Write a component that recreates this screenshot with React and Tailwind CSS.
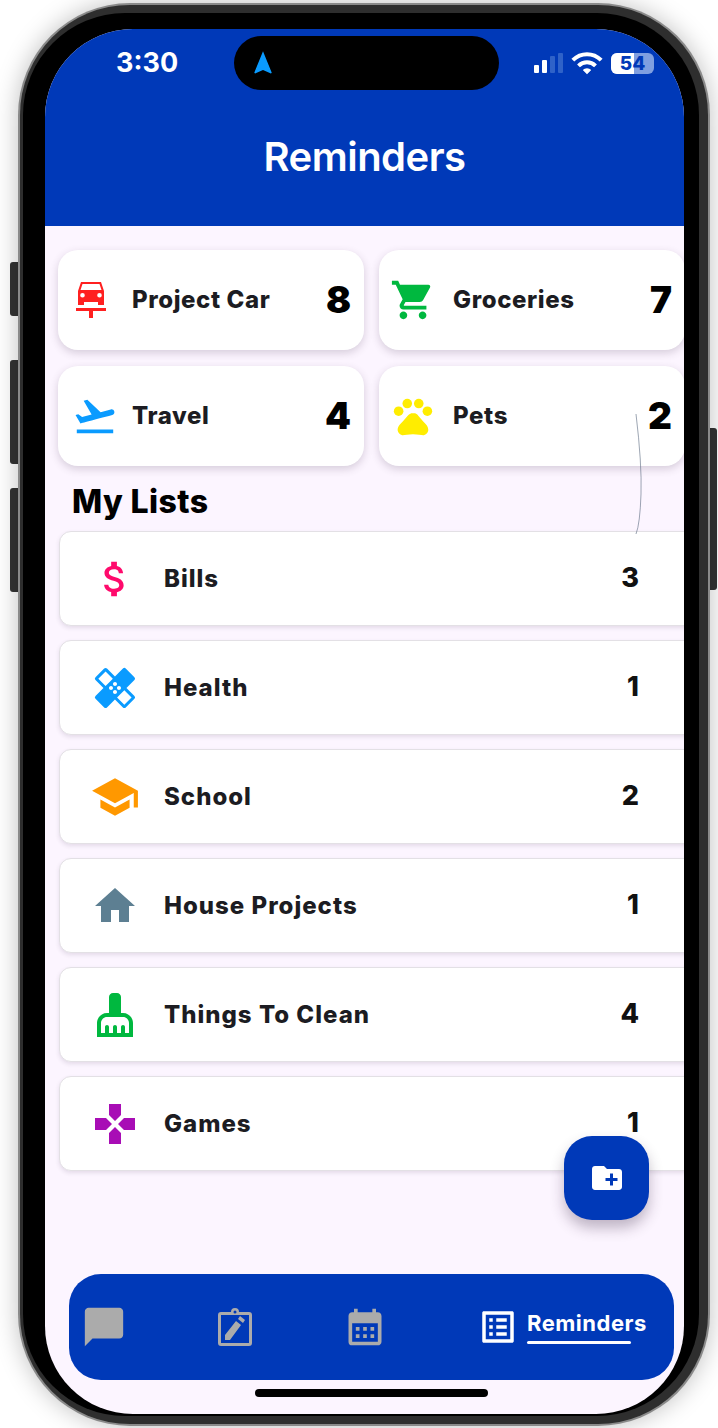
import React from "react";
import {
  MdShoppingCart,
  MdFlightTakeoff,
  MdAttachMoney,
  MdHealing,
  MdSchool,
  MdHome,
  MdCleaningServices,
  MdGamepad,
  MdChatBubble,
  MdCalendarMonth,
  MdOutlineListAlt,
  MdCreateNewFolder,
  MdPets,
  MdNavigation,
  MdWifi,
} from "react-icons/md";

const CarLift = ({ className }) => (
  <svg viewBox="0 0 30 36" className={className} fill="currentColor">
    <path d="M5 0h20l3 9v14h-6v-3H8v3H2V9zM6.500 2 4.500 8h21l-2-6zM6.500 11a2.300 2.300 0 1 0 0 4.600 2.300 2.300 0 0 0 0-4.600zM23.500 11a2.300 2.300 0 1 0 0 4.600 2.300 2.300 0 0 0 0-4.600z" fillRule="evenodd" />
    <path d="M0 26h30v3H17v7h-4v-7H0z" />
  </svg>
);

const ClipboardEdit = ({ className }) => (
  <svg viewBox="0 0 34 38" className={className} fill="currentColor">
    <path fillRule="evenodd" d="M3 4h10a4 4 0 0 1 8 0h10a3 3 0 0 1 3 3v28a3 3 0 0 1-3 3H3a3 3 0 0 1-3-3V7a3 3 0 0 1 3-3zM3 7v28h28V7zM17 2.500a1.500 1.500 0 1 0 0 3 1.500 1.500 0 0 0 0-3z" />
    <path d="M7 32v-5l11-14 5 4-11 15zM20 11l2-3 5 4-2 3z" />
  </svg>
);

const topCards = [
  { name: "Project Car", count: 8, icon: <CarLift className="w-[30px] h-[36px] text-[#ff2020]" />, iconBox: "ml-[18px] w-[56px]" },
  { name: "Groceries", count: 7, icon: <MdShoppingCart className="w-[46px] h-[46px] text-[#00b83f] -ml-[3px]" />, iconBox: "ml-[14px] w-[60px]" },
  { name: "Travel", count: 4, icon: <MdFlightTakeoff className="w-[46px] h-[46px] text-[#0a9bff] -ml-[4px]" />, iconBox: "ml-[18px] w-[56px]" },
  { name: "Pets", count: 2, icon: <MdPets className="w-[46px] h-[46px] text-[#ffed00] -ml-[3px]" />, iconBox: "ml-[14px] w-[60px]" },
];

const lists = [
  { name: "Bills", count: 3, icon: <MdAttachMoney className="w-[46px] h-[46px] text-[#ff0a6c]" /> },
  { name: "Health", count: 1, icon: <MdHealing className="w-[48px] h-[48px] text-[#0a9bff]" /> },
  { name: "School", count: 2, icon: <MdSchool className="w-[50px] h-[50px] text-[#ff9800]" /> },
  { name: "House Projects", count: 1, icon: <MdHome className="w-[48px] h-[48px] text-[#5d7f92]" /> },
  { name: "Things To Clean", count: 4, icon: <MdCleaningServices className="w-[48px] h-[48px] text-[#00b83f]" /> },
  { name: "Games", count: 1, icon: <MdGamepad className="w-[48px] h-[48px] text-[#a80db5]" /> },
];

const StatusIcons = () => (
  <div className="flex items-center ml-auto mr-[30px] gap-[7px]">
    <div className="flex items-end gap-[3px] h-[20px]">
      <div className="w-[5px] h-[8px] rounded-[1px] bg-white" />
      <div className="w-[5px] h-[13px] rounded-[1px] bg-white" />
      <div className="w-[5px] h-[17px] rounded-[1px] bg-[#2f62c8]" />
      <div className="w-[5px] h-[20px] rounded-[1px] bg-[#2f62c8]" />
    </div>
    <MdWifi className="w-[34px] h-[34px] text-white" />
    <div className="relative flex items-center w-[43px] h-[21px] rounded-[6px] overflow-hidden bg-[#7f9fe0]">
      <div className="w-[23px] h-full bg-white" />
      <span className="absolute inset-0 text-center font-['Inter'] font-extrabold text-[19px] leading-[21px] text-[#0039b8]">54</span>
    </div>
  </div>
);

const App = () => {
  return (
    <div className="relative w-[718px] h-[1428px] overflow-hidden bg-white font-['Inter',sans-serif]">
      {/* side buttons */}
      <div className="absolute left-[10px] top-[262px] w-[12px] h-[54px] rounded-l-[3px] bg-[#333]" />
      <div className="absolute left-[10px] top-[360px] w-[12px] h-[104px] rounded-l-[3px] bg-[#333]" />
      <div className="absolute left-[10px] top-[488px] w-[12px] h-[104px] rounded-l-[3px] bg-[#333]" />
      <div className="absolute left-[706px] top-[428px] w-[11px] h-[162px] rounded-r-[3px] bg-[#333]" />

      {/* phone body */}
      <div className="absolute left-[18px] top-[3px] w-[692px] h-[1423px] rounded-[112px] bg-[#8a8a8a] p-[2px] shadow-[0_0_24px_rgba(0,0,0,0.25)]">
        <div className="w-full h-full rounded-[110px] bg-[#2e2e2e] pt-[8px] pl-[3px] pr-[9px] pb-[8px]">
          <div className="w-full h-full rounded-[102px] bg-black pt-[16px] pl-[22px] pr-[15px] pb-[6px]">
            {/* screen */}
            <div className="relative flex flex-col w-[639px] h-[1385px] rounded-[88px] overflow-hidden bg-[#fcf5ff]">
              <header className="flex flex-col h-[197px] bg-[#0039b8]">
                <div className="relative flex items-center h-[66px] pt-[2px]">
                  <span className="ml-[71px] text-white font-bold text-[27px]">3:30</span>
                  <MdNavigation className="absolute left-[205px] top-[18px] w-[26px] h-[26px] text-[#0a9bff]" />
                  <StatusIcons />
                </div>
                <h1 className="mt-[38px] text-center text-white font-semibold text-[40px] leading-[48px] tracking-[-0.5px]">Reminders</h1>
              </header>

              <main className="flex flex-col flex-1 pl-[13px]">
                <div className="grid grid-cols-[306px_306px] gap-x-[15px] gap-y-[16px] mt-[24px]">
                  {topCards.map((card) => (
                    <div key={card.name} className="flex items-center h-[100px] rounded-[20px] bg-white shadow-[0_3px_8px_rgba(60,40,70,0.2)]">
                      <div className={`flex items-center shrink-0 ${card.iconBox}`}>{card.icon}</div>
                      <span className="font-extrabold text-[24px] tracking-[0.6px] text-[#1c1c22]">{card.name}</span>
                      <span className="ml-auto mr-[13px] font-black text-[37px] text-black">{card.count}</span>
                    </div>
                  ))}
                </div>

                <h2 className="mt-[16px] ml-[14px] font-extrabold text-[32px] leading-[40px] tracking-[0.4px] text-black">My Lists</h2>

                <div className="flex flex-col gap-[14px] mt-[9px] ml-[1px] w-[640px]">
                  {lists.map((item) => (
                    <div key={item.name} className="flex items-center h-[95px] rounded-[12px] border border-[#e3e0e5] bg-white shadow-[0_2px_4px_rgba(60,40,70,0.12)]">
                      <div className="flex justify-center shrink-0 ml-[30px] w-[50px]">{item.icon}</div>
                      <span className="ml-[24px] font-extrabold text-[24px] tracking-[1px] text-[#1c1c22]">{item.name}</span>
                      <span className="ml-auto mr-[59px] font-extrabold text-[27px] text-[#111]">{item.count}</span>
                    </div>
                  ))}
                </div>
              </main>

              <nav className="flex items-center h-[106px] mb-[34px] ml-[24px] w-[605px] rounded-[32px] bg-[#0039b8]">
                <MdChatBubble className="ml-[12px] w-[46px] h-[46px] text-[#ababab]" />
                <ClipboardEdit className="ml-[91px] w-[34px] h-[38px] text-[#ababab]" />
                <MdCalendarMonth className="ml-[91px] w-[44px] h-[44px] text-[#ababab]" />
                <MdOutlineListAlt className="ml-[90px] w-[42px] h-[42px] text-white" />
                <div className="ml-[8px] flex flex-col">
                  <span className="font-bold text-[22px] leading-[26px] tracking-[0.5px] text-white">Reminders</span>
                  <div className="mt-[5px] w-[104px] h-[3px] rounded-full bg-white" />
                </div>
              </nav>

              {/* dynamic island */}
              <div className="absolute left-[189px] top-[7px] w-[265px] h-[54px] rounded-full bg-black flex items-center">
                <MdNavigation className="ml-[15px] w-[28px] h-[28px] text-[#0a9bff]" />
              </div>

              {/* floating add button */}
              <button className="absolute left-[519px] top-[1107px] flex items-center justify-center w-[85px] h-[84px] rounded-[28px] bg-[#0039b8] shadow-[0_8px_14px_rgba(50,30,60,0.3)]">
                <MdCreateNewFolder className="w-[36px] h-[36px] text-white" />
              </button>

              {/* home indicator */}
              <div className="absolute left-[210px] top-[1360px] w-[233px] h-[8px] rounded-full bg-black" />

              {/* stray hairlines from the capture */}
              <svg className="absolute left-[585px] top-[375px] w-[20px] h-[135px]" viewBox="0 0 20 135" fill="none">
                <path d="M6 10Q12 60 11 90T6 130" stroke="#5a6a80" strokeWidth="0.6" />
              </svg>
            </div>
          </div>
        </div>
      </div>
    </div>
  );
};

export default App;
